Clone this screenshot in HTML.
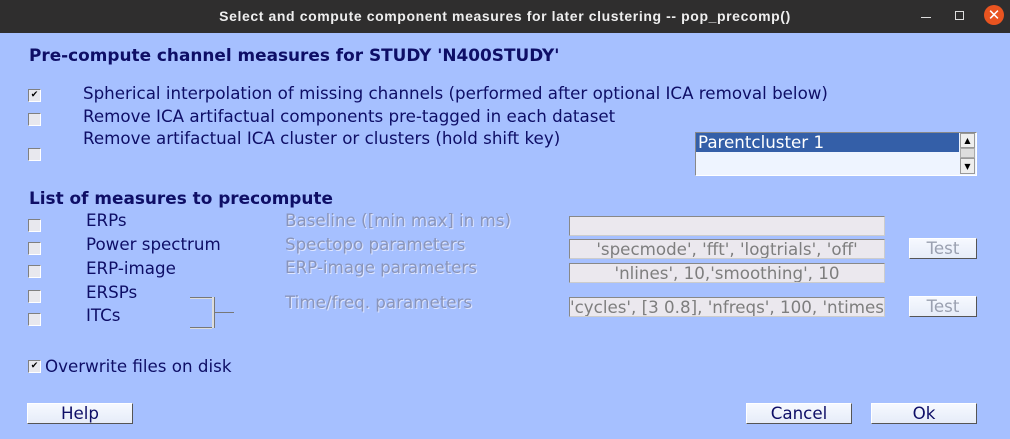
<!DOCTYPE html>
<html><head><meta charset="utf-8"><style>
body{margin:0;width:1010px;height:439px;background:#a6c0ff;position:relative;overflow:hidden;font-family:"DejaVu Sans","Liberation Sans",sans-serif;color:#0e0e66}
.a{position:absolute;white-space:nowrap}
.t{font-size:16.7px;line-height:18px}
.h{font-size:16.9px;font-weight:bold;line-height:18px}
.cb{position:absolute;width:11px;height:11px;background:#e8e8ee;border:1px solid #808080;border-right-color:#fff;border-bottom-color:#fff;font-size:9px;line-height:11px;text-align:center;color:#000}
.d{font-size:16.7px;line-height:18px;color:#8a95ba;text-shadow:1px 1px 0 #dfe6ff}
.f{position:absolute;height:18px;background:#ebe8ee;border:1px solid #888;border-right-color:#ccc;border-bottom-color:#ccc;font-size:16.7px;line-height:18px;color:#7e7e7e;text-align:center;overflow:hidden;white-space:nowrap}
.b{position:absolute;height:19px;background:linear-gradient(#f6f9ff,#e6ecf8);border:1px solid #fff;border-right-color:#555;border-bottom-color:#555;font-size:16.7px;line-height:19px;text-align:center;color:#0e0e66;box-sizing:border-box}
</style></head><body>
<div class="a" style="left:0;top:0;width:1010px;height:33px;background:#2f2e2e"></div>
<div class="a" style="left:0;top:7px;width:1010px;text-align:center;color:#eee;font-weight:bold;font-size:14px;letter-spacing:0.6px;line-height:18px;font-family:'Liberation Sans','DejaVu Sans',sans-serif">Select and compute component measures for later clustering -- pop_precomp()</div>
<div class="a" style="left:921px;top:17px;width:10px;height:1px;background:#ddd"></div>
<div class="a" style="left:955px;top:11px;width:7px;height:7px;border:1px solid #ddd"></div>
<div class="a" style="left:984px;top:5px;width:20px;height:20px;border-radius:50%;background:#e95420;color:#fff;text-align:center;font-size:15px;line-height:20px">✕</div>

<div class="a h" style="left:29px;top:46px">Pre-compute channel measures for STUDY 'N400STUDY'</div>
<div class="cb" style="left:28px;top:89px">✔</div>
<div class="a t" style="left:83px;top:84px">Spherical interpolation of missing channels (performed after optional ICA removal below)</div>
<div class="cb" style="left:28px;top:113px"></div>
<div class="a t" style="left:83px;top:107px">Remove ICA artifactual components pre-tagged in each dataset</div>
<div class="cb" style="left:28px;top:148px"></div>
<div class="a t" style="left:83px;top:129px">Remove artifactual ICA cluster or clusters (hold shift key)</div>

<div class="a" style="left:695px;top:132px;width:280px;height:42px;background:#eef4ff;border:1px solid #888;border-right-color:#fff;border-bottom-color:#fff"></div>
<div class="a" style="left:696px;top:133px;width:263px;height:19px;background:#345fa8;color:#fff;font-size:16.7px;line-height:19px;padding-left:2px;box-sizing:border-box">Parentcluster 1</div>
<div class="a" style="left:960px;top:133px;width:15px;height:15px;background:#eee;border:1px solid #999;box-sizing:border-box;font-size:8px;text-align:center;line-height:14px;color:#000">▲</div>
<div class="a" style="left:960px;top:148px;width:15px;height:10px;background:#ddd;border:1px solid #aaa;box-sizing:border-box"></div>
<div class="a" style="left:960px;top:158px;width:15px;height:16px;background:#eee;border:1px solid #999;box-sizing:border-box;font-size:8px;text-align:center;line-height:15px;color:#000">▼</div>

<div class="a h" style="left:29px;top:189px">List of measures to precompute</div>
<div class="cb" style="left:28px;top:219px"></div><div class="a t" style="left:86px;top:211px">ERPs</div>
<div class="cb" style="left:28px;top:242px"></div><div class="a t" style="left:86px;top:235px">Power spectrum</div>
<div class="cb" style="left:28px;top:265px"></div><div class="a t" style="left:86px;top:259px">ERP-image</div>
<div class="cb" style="left:28px;top:290px"></div><div class="a t" style="left:86px;top:283px">ERSPs</div>
<div class="cb" style="left:28px;top:313px"></div><div class="a t" style="left:86px;top:306px">ITCs</div>

<div class="a" style="left:190px;top:297px;width:22px;height:1px;background:#777;border-bottom:1px solid #ddd"></div>
<div class="a" style="left:190px;top:327px;width:22px;height:1px;background:#777;border-bottom:1px solid #ddd"></div>
<div class="a" style="left:212px;top:297px;width:2px;height:31px;background:#ddd;border-right:1px solid #777"></div>
<div class="a" style="left:215px;top:312px;width:19px;height:1px;background:#777"></div>

<div class="a d" style="left:285px;top:211px">Baseline ([min max] in ms)</div>
<div class="a d" style="left:285px;top:235px">Spectopo parameters</div>
<div class="a d" style="left:285px;top:258px">ERP-image parameters</div>
<div class="a d" style="left:285px;top:293px">Time/freq. parameters</div>

<div class="f" style="left:569px;top:216px;width:314px"></div>
<div class="f" style="left:569px;top:239px;width:314px">'specmode', 'fft', 'logtrials', 'off'</div>
<div class="f" style="left:569px;top:263px;width:314px">'nlines', 10,'smoothing', 10</div>
<div class="f" style="left:569px;top:297px;width:314px;text-align:left">'cycles', [3 0.8], 'nfreqs', 100, 'ntimes</div>

<div class="b" style="left:909px;top:238px;width:68px;height:21px;color:#9aa0b0;line-height:19px">Test</div>
<div class="b" style="left:909px;top:296px;width:68px;height:21px;color:#9aa0b0;line-height:19px">Test</div>

<div class="cb" style="left:28px;top:360px">✔</div>
<div class="a t" style="left:45px;top:357px">Overwrite files on disk</div>

<div class="b" style="left:27px;top:403px;width:106px;height:21px">Help</div>
<div class="b" style="left:746px;top:403px;width:106px;height:21px">Cancel</div>
<div class="b" style="left:871px;top:403px;width:106px;height:21px">Ok</div>
</body></html>
